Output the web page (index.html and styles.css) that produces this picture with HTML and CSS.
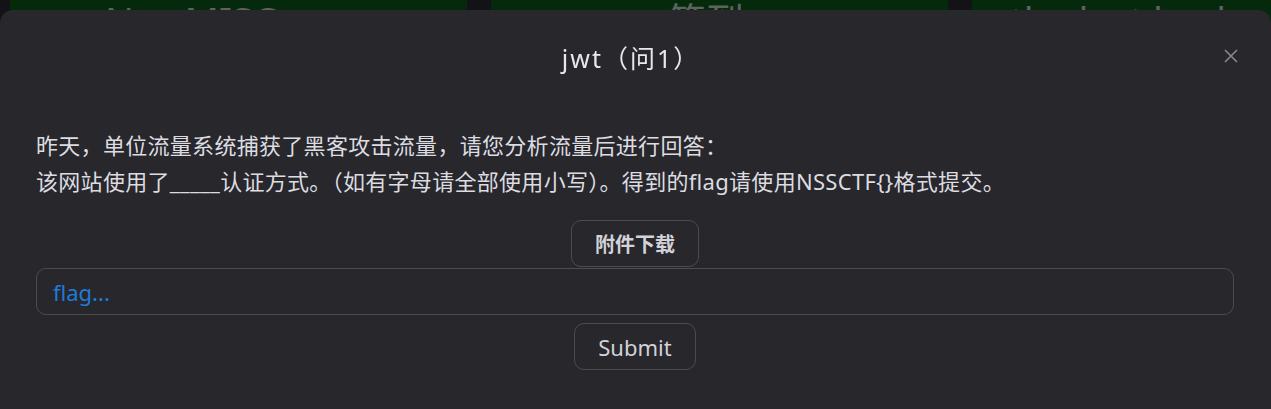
FILE: index.html
```html
<!DOCTYPE html>
<html lang="zh-CN">
<head>
  <meta charset="UTF-8" />
  <meta name="viewport" content="width=device-width, initial-scale=1.0"/>
  <title>jwt（问1）</title>
  <link rel="stylesheet" href="styles.css">
</head>
<body>
  <div class="board">
    <div class="card card-a"><span>NewMISC</span></div>
    <div class="card card-b"><span>签到</span></div>
    <div class="card card-c"><span>the lost hack</span></div>
  </div>

  <div class="modal">
    <div class="modal-header">
      <h2 class="modal-title">jwt（问1）</h2>
      <button class="close-btn" aria-label="close">
        <svg width="14" height="14" viewBox="0 0 14 14">
          <path d="M1 1 L13 13 M13 1 L1 13" stroke="#8b8b91" stroke-width="1.5" fill="none"/>
        </svg>
      </button>
    </div>

    <p class="desc">
      昨天，单位流量系统捕获了黑客攻击流量，请您分析流量后进行回答：<br>
      该网站使用了_____认证方式。（如有字母请全部使用小写）。得到的flag请使用NSSCTF{}格式提交。
    </p>

    <div class="actions">
      <button class="btn btn-bold">附件下载</button>
    </div>

    <input type="text" class="flag-input" placeholder="flag...">

    <div class="actions submit-row">
      <button class="btn">Submit</button>
    </div>
  </div>
</body>
</html>
```

FILE: styles.css
```css
* {
  margin: 0;
  padding: 0;
  box-sizing: border-box;
}

body {
  font-family: 'Noto Sans', 'Noto Sans CJK SC', sans-serif;
  background: #131317;
  height: 100vh;
  overflow: hidden;
}

.board {
  display: grid;
  grid-template-columns: 457px 457px 457px;
  gap: 24px;
  padding-left: 10px;
}

.card {
  background: #052a0b;
  height: 60px;
  color: #5f6360;
  font-size: 38px;
  line-height: 40px;
  white-space: nowrap;
  overflow: hidden;
}

.card-a {
  padding-left: 95px;
}

.card-b {
  padding-left: 177px;
}

.card-c {
  padding-left: 38px;
}

.modal {
  position: fixed;
  top: 10px;
  left: 0;
  right: 0;
  bottom: -20px;
  background: #27272c;
  border-radius: 13px;
  padding: 0 37px 0 36px;
  color: #dcdce1;
}

.modal-header {
  height: 100px;
  padding-bottom: 6px;
  display: flex;
  align-items: center;
  justify-content: center;
  position: relative;
}

.modal-title {
  font-size: 25px;
  font-weight: 400;
  color: #e8e8ec;
  letter-spacing: 2px;
  margin-right: 8px;
}

.close-btn {
  position: absolute;
  right: -4px;
  top: 39px;
  width: 14px;
  height: 14px;
  background: none;
  border: none;
  cursor: pointer;
  display: flex;
}

.desc {
  margin-top: 17px;
  font-size: 22px;
  line-height: 36px;
  letter-spacing: 0.3px;
  color: #dcdce1;
}

.actions {
  display: flex;
  justify-content: center;
  margin-top: 21px;
}

.btn {
  font-family: inherit;
  height: 47px;
  padding: 0 23px;
  background: transparent;
  border: 1px solid #4b4b51;
  border-radius: 10px;
  color: #d2d2d8;
  font-size: 22px;
  cursor: pointer;
}

.btn-bold {
  font-weight: 700;
  font-size: 20px;
}

.flag-input {
  display: block;
  width: 100%;
  height: 47px;
  margin-top: 1px;
  padding: 0 16px;
  background: transparent;
  border: 1px solid #4b4b51;
  border-radius: 10px;
  font-family: inherit;
  font-size: 22px;
  color: #dcdce1;
  outline: none;
}

.flag-input::placeholder {
  color: #1f7bd8;
}

.submit-row {
  margin-top: 8px;
}
```
